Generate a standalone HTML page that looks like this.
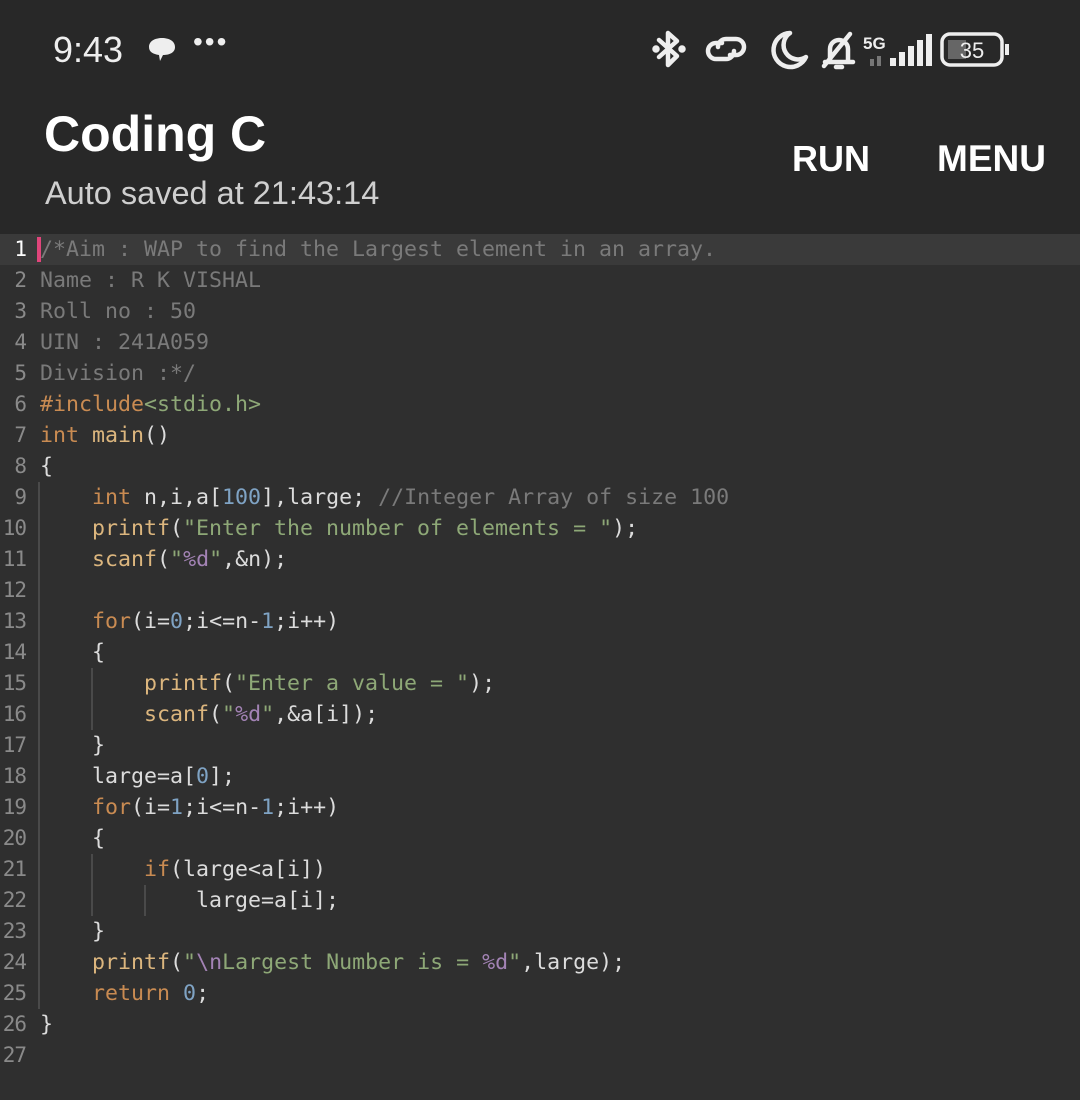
<!DOCTYPE html>
<html><head><meta charset="utf-8"><style>
body{margin:0;width:1080px;height:1100px;background:#2f2f2f;overflow:hidden;font-family:"Liberation Sans",sans-serif;position:relative}
.hdr{position:absolute;left:0;top:0;width:1080px;height:234px;background:#282828}
.abs{position:absolute;white-space:pre}
.code{position:absolute;left:0;top:234px;width:1080px;font-family:"DejaVu Sans Mono",monospace;font-size:21.6px;color:#dcdcdc}
.ln{height:31px;line-height:31px;position:relative;white-space:pre}
.ln .n{position:absolute;right:1054px;color:#8a8a8a;font-size:21px;letter-spacing:-1px}
.ln .t{position:absolute;left:40px}
.k{color:#c98b52}.f{color:#dcb67e}.s{color:#8ea877}.p{color:#a383b5}.num{color:#7fa3c4}.c{color:#7a7a7a}.m{color:#c98b52}
.g{position:absolute;width:2px;background:#4a4a4a}
</style></head><body>
<div class="hdr"></div>
<div class="abs" style="left:53px;top:29px;font-size:36px;color:#eee">9:43</div>
<svg class="abs" style="left:146px;top:34px" width="32" height="32" viewBox="0 0 32 32"><path d="M3 13c0-6 6-9 13-9s13 3 13 9-6 8-12 8l-3 6-1-6C7 20 3 18 3 13z" fill="#eee"/></svg>
<div class="abs" style="left:193px;top:26px;font-size:28px;color:#eee;letter-spacing:2px">•••</div>
<svg class="abs" style="left:650px;top:26px" width="370" height="46" viewBox="0 0 370 46">
<g stroke="#eee" stroke-width="4.5" fill="none" stroke-linecap="round" stroke-linejoin="round">
<path d="M9 14l18 16-9 9V7l9 8-18 16"/>
<circle cx="6" cy="23" r="1.5" fill="#eee"/><circle cx="32" cy="23" r="1.5" fill="#eee"/>
<path d="M72 17h-6a8 8 0 0 0 0 16h10a8 8 0 0 0 8-8"/>
<path d="M80 29h6a8 8 0 0 0 0-16H76a8 8 0 0 0-8 8"/>
<path d="M140 7a17 17 0 1 0 16 24A14 14 0 0 1 140 7z"/>
<path d="M175 36h28M180 36V23a9 9 0 0 1 18 0v13M186 41h6M174 40L200 8"/>
</g>
<text x="213" y="23" fill="#eee" font-family="Liberation Sans" font-size="17" font-weight="bold">5G</text>
<g fill="#eee"><rect x="240" y="32" width="6" height="8"/><rect x="249" y="26" width="6" height="14"/><rect x="258" y="20" width="6" height="20"/><rect x="267" y="14" width="6" height="26"/><rect x="276" y="8" width="6" height="32"/></g>
<g fill="#777"><rect x="220" y="33" width="4" height="7"/><rect x="227" y="30" width="4" height="10"/></g>
<rect x="292" y="8" width="60" height="31" rx="8" fill="none" stroke="#eee" stroke-width="3.5"/>
<rect x="298" y="14" width="18" height="19" fill="#666"/>
<rect x="355" y="18" width="4" height="11" fill="#eee"/>
<text x="322" y="32" text-anchor="middle" fill="#eee" font-family="Liberation Sans" font-size="22">35</text>
</svg>
<div class="abs" style="left:44px;top:105px;font-size:50px;font-weight:bold;color:#fff">Coding C</div>
<div class="abs" style="left:45px;top:175px;font-size:32.5px;color:#cfcfcf">Auto saved at 21:43:14</div>
<div class="abs" style="left:792px;top:138px;font-size:36px;font-weight:bold;color:#fff">RUN</div>
<div class="abs" style="left:937px;top:138px;font-size:37px;font-weight:bold;color:#fff">MENU</div>
<div class="abs" style="left:0;top:234px;width:1080px;height:31px;background:#3a3a3a"></div>
<div class="abs" style="left:37px;top:237px;width:4px;height:25px;background:#e0457b"></div>
<div class="g" style="left:38px;top:482px;height:527px"></div>
<div class="g" style="left:91px;top:668px;height:62px"></div>
<div class="g" style="left:91px;top:854px;height:62px"></div>
<div class="g" style="left:144px;top:885px;height:31px"></div>
<div class="code">
<div class="ln"><span class="n" style="color:#fff">1</span><span class="t c">/*Aim : WAP to find the Largest element in an array.</span></div>
<div class="ln"><span class="n">2</span><span class="t c">Name : R K VISHAL</span></div>
<div class="ln"><span class="n">3</span><span class="t c">Roll no : 50</span></div>
<div class="ln"><span class="n">4</span><span class="t c">UIN : 241A059</span></div>
<div class="ln"><span class="n">5</span><span class="t c">Division :*/</span></div>
<div class="ln"><span class="n">6</span><span class="t"><span class="m">#include</span><span class="s">&lt;stdio.h&gt;</span></span></div>
<div class="ln"><span class="n">7</span><span class="t"><span class="k">int</span> <span class="f">main</span>()</span></div>
<div class="ln"><span class="n">8</span><span class="t">{</span></div>
<div class="ln"><span class="n">9</span><span class="t">    <span class="k">int</span> n,i,a[<span class="num">100</span>],large; <span class="c">//Integer Array of size 100</span></span></div>
<div class="ln"><span class="n">10</span><span class="t">    <span class="f">printf</span>(<span class="s">"Enter the number of elements = "</span>);</span></div>
<div class="ln"><span class="n">11</span><span class="t">    <span class="f">scanf</span>(<span class="s">"<span class="p">%d</span>"</span>,&amp;n);</span></div>
<div class="ln"><span class="n">12</span><span class="t"></span></div>
<div class="ln"><span class="n">13</span><span class="t">    <span class="k">for</span>(i=<span class="num">0</span>;i&lt;=n-<span class="num">1</span>;i++)</span></div>
<div class="ln"><span class="n">14</span><span class="t">    {</span></div>
<div class="ln"><span class="n">15</span><span class="t">        <span class="f">printf</span>(<span class="s">"Enter a value = "</span>);</span></div>
<div class="ln"><span class="n">16</span><span class="t">        <span class="f">scanf</span>(<span class="s">"<span class="p">%d</span>"</span>,&amp;a[i]);</span></div>
<div class="ln"><span class="n">17</span><span class="t">    }</span></div>
<div class="ln"><span class="n">18</span><span class="t">    large=a[<span class="num">0</span>];</span></div>
<div class="ln"><span class="n">19</span><span class="t">    <span class="k">for</span>(i=<span class="num">1</span>;i&lt;=n-<span class="num">1</span>;i++)</span></div>
<div class="ln"><span class="n">20</span><span class="t">    {</span></div>
<div class="ln"><span class="n">21</span><span class="t">        <span class="k">if</span>(large&lt;a[i])</span></div>
<div class="ln"><span class="n">22</span><span class="t">            large=a[i];</span></div>
<div class="ln"><span class="n">23</span><span class="t">    }</span></div>
<div class="ln"><span class="n">24</span><span class="t">    <span class="f">printf</span>(<span class="s">"<span class="p">\n</span>Largest Number is = <span class="p">%d</span>"</span>,large);</span></div>
<div class="ln"><span class="n">25</span><span class="t">    <span class="k">return</span> <span class="num">0</span>;</span></div>
<div class="ln"><span class="n">26</span><span class="t">}</span></div>
<div class="ln"><span class="n">27</span><span class="t"></span></div>
</div>
</body></html>
